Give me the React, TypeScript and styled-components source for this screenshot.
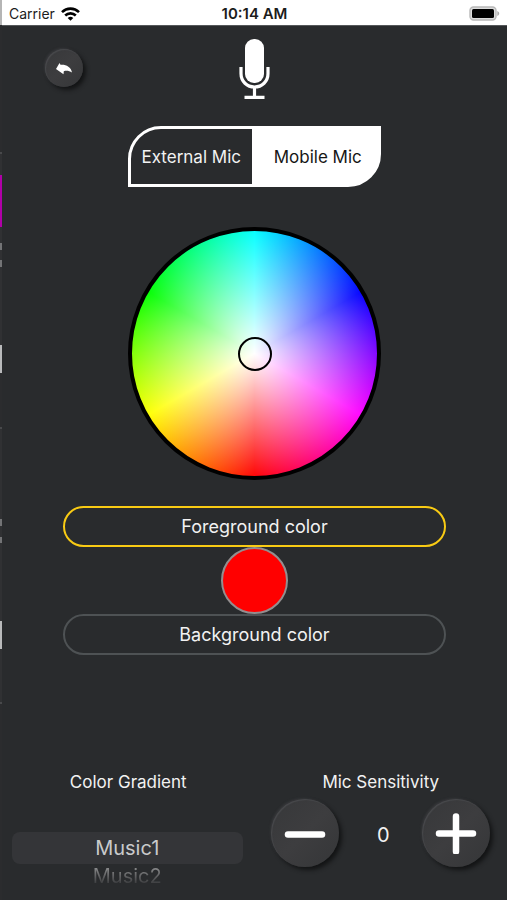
import { useState } from "react";
import styled, { createGlobalStyle } from "styled-components";

const GlobalStyle = createGlobalStyle`
  *, *::before, *::after { box-sizing: border-box; }
  body {
    margin: 0;
    background: #292b2d;
    color: #f2f2f2;
    font-family: Inter, "Liberation Sans", sans-serif;
  }
  button { font: inherit; color: inherit; padding: 0; border: 0; background: none; cursor: pointer; }
`;

const Screen = styled.div`
  display: grid;
  grid-template-columns: 2px minmax(0, 1fr);
  min-height: 100vh;
`;

/* Edge of the page that lies to the left in the pager. */
const PreviousPageEdge = styled.div`
  background: linear-gradient(
    #b5b5b5 0 25px,
    #2b2c2e 25px 152px,
    #48494b 152px 154px,
    #303133 154px 175px,
    #b000a8 175px 227px,
    #303133 227px 243px,
    #737476 243px 250px,
    #303133 250px 260px,
    #737476 260px 267px,
    #303133 267px 345px,
    #b9babb 345px 373px,
    #2b2c2e 373px 427px,
    #48494b 427px 429px,
    #303133 429px 519px,
    #737476 519px 526px,
    #303133 526px 537px,
    #737476 537px 543px,
    #303133 543px 621px,
    #b9babb 621px 649px,
    #303133 649px 702px,
    #48494b 702px 704px,
    #2b2c2e 704px
  );
`;

const Page = styled.div`
  display: flex;
  flex-direction: column;
`;

const StatusBar = styled.div`
  display: grid;
  grid-template-columns: 1fr auto 1fr;
  align-items: center;
  height: 26px;
  padding: 2px 7px 0 7px;
  background: #fff;
  color: #1c1c1c;
  border-bottom: 1px solid #55585a;
  font-size: 14px;
  line-height: 20px;
`;

const Carrier = styled.span`
  display: flex;
  align-items: center;
  gap: 6px;
`;

const Clock = styled.time`
  font-size: 15px;
  font-weight: 600;
`;

const BatterySlot = styled.span`
  display: flex;
  justify-content: flex-end;
`;

const Header = styled.header`
  display: grid;
  grid-template-columns: 1fr auto 1fr;
  align-items: start;
  padding: 13px 43px 0;
`;

const RoundButton = styled.button<{ $size: number }>`
  && {
    display: flex;
    align-items: center;
    justify-content: center;
    flex: none;
    width: ${(p) => p.$size}px;
    height: ${(p) => p.$size}px;
    border-radius: 50%;
    background: linear-gradient(135deg, #37383a, #3d3d3f 50%, #353638);
    box-shadow: 3px 3px 4px #131415, -1px -1px 2px #38393c, inset 1px 1px 1px #48494c;
  }
`;

const BackButton = styled(RoundButton)`
  margin-top: 10px;
`;

const Main = styled.main`
  display: flex;
  flex-direction: column;
  align-items: center;
  padding: 26px 61px 0;
`;

const MicSwitch = styled.div`
  display: grid;
  grid-template-columns: 1fr 1fr;
  width: 253px;
  max-width: 100%;
  height: 61px;
`;

const MicOption = styled.button<{ $active: boolean }>`
  && {
    border: 3px solid #fff;
    background: ${(p) => (p.$active ? "#fff" : "transparent")};
    color: ${(p) => (p.$active ? "#161616" : "#f2f2f2")};
    font-size: 17px;
    white-space: nowrap;
  }

  &&:first-child {
    border-top-left-radius: 33px;
  }

  &&:last-child {
    border-bottom-right-radius: 33px;
  }
`;

const ColorWheel = styled.div`
  display: grid;
  place-items: center;
  width: 253px;
  max-width: 100%;
  aspect-ratio: 1;
  margin-top: 40px;
  border: 4px solid #000;
  border-radius: 50%;
  background:
    radial-gradient(closest-side, #fff, rgba(255, 255, 255, 0)) border-box,
    conic-gradient(#0ff, #00f 60deg, #f0f 120deg, #f00 180deg, #ff0 240deg, #0f0 300deg, #0ff) border-box;
`;

const WheelHandle = styled.button`
  && {
    width: 34px;
    height: 34px;
    border: 2px solid #000;
    border-radius: 50%;
  }
`;

const ColorTarget = styled.button<{ $active: boolean }>`
  && {
    width: 100%;
    height: 41px;
    border: 2px solid ${(p) => (p.$active ? "#f9cb14" : "#4e5254")};
    border-radius: 21px;
    font-size: 18px;
  }
`;

const ColorTargets = styled.div`
  display: flex;
  flex-direction: column;
  align-items: center;
  width: 100%;
  margin-top: 26px;
`;

const Swatch = styled.div`
  width: 67px;
  height: 67px;
  border: 2px solid #948e8f;
  border-radius: 50%;
  background: #f00;
`;

const Controls = styled.div`
  display: grid;
  grid-template-columns: 1fr 1fr;
  margin-top: 115px;
`;

const ControlGroup = styled.section`
  display: flex;
  flex-direction: column;
`;

const ControlTitle = styled.h2`
  margin: 0;
  font-size: 17px;
  font-weight: 400;
  line-height: 24px;
  text-align: center;
`;

const Picker = styled.div`
  display: flex;
  flex-direction: column;
  padding: 38px 12px 0 10px;
`;

const PickerOption = styled.label<{ $active: boolean }>`
  display: flex;
  flex: none;
  justify-content: center;
  height: 32px;
  border-radius: 8px;
  background: ${(p) => (p.$active ? "#343538" : "transparent")};
  color: ${(p) => (p.$active ? "#c9cacb" : "transparent")};
  font-size: 20px;
  line-height: ${(p) => (p.$active ? 32 : 24)}px;
  cursor: pointer;

  span {
    background: ${(p) => (p.$active ? "none" : "linear-gradient(#88898a 4px, #3a3b3d 20px)")};
    background-clip: text;
  }

  input {
    appearance: none;
    width: 0;
    height: 0;
    margin: 0;
  }
`;

const Stepper = styled.div`
  display: flex;
  align-items: center;
  justify-content: space-between;
  padding: 5px 17px 0 16px;
`;

const StepValue = styled.output`
  padding: 4px 0 0 6px;
  font-size: 20px;
  line-height: 24px;
`;

function WifiIcon() {
  return (
    <svg width="19" height="14" viewBox="0 0 19 14" fill="none" stroke="#000" strokeWidth="2.6" aria-hidden="true">
      <path d="M1 5.1a12.2 12.2 0 0 1 17 0" />
      <path d="M4.2 8.5a7.6 7.6 0 0 1 10.6 0" />
      <path d="M9.5 13.8 6.7 11a4 4 0 0 1 5.6 0z" fill="#000" stroke="none" />
    </svg>
  );
}

function BatteryIcon() {
  return (
    <svg width="31" height="15" viewBox="0 0 31 15" aria-hidden="true">
      <rect x="1" y="1" width="26" height="13" rx="3.5" fill="#dcdcdc" stroke="#b8b8b8" strokeWidth="1.4" />
      <rect x="3" y="3" width="22" height="9" rx="1.5" fill="#000" />
      <path d="M28.3 5v5c1.1-.4 1.9-1.4 1.9-2.5s-.8-2.1-1.9-2.5z" fill="#ababab" />
    </svg>
  );
}

function BackIcon() {
  return (
    <svg width="18" height="14" viewBox="0 0 18 14" fill="#fff" aria-hidden="true">
      <path d="M1 8 4.500 2l1 1.800C10.500 3.200 16 5.500 17 11.500c-2.500-1.600-5.500-2-8.200-1.300l-.3 3z" />
    </svg>
  );
}

function MicIcon() {
  return (
    <svg width="31" height="61" viewBox="0 0 31 61" aria-hidden="true">
      <rect x="6" y="0" width="19" height="44" rx="9" fill="#fff" />
      <path
        d="M2 28v6.5C2 42.5 8 48 15.5 48S29 42.5 29 34.5V28M15.5 48v10M5.5 58.3h20"
        fill="none"
        stroke="#fff"
        strokeWidth="3.2"
      />
    </svg>
  );
}

function StepIcon({ plus = false }: { plus?: boolean }) {
  return (
    <svg width="42" height="42" viewBox="0 0 42 42" stroke="#fff" strokeWidth="6.5" strokeLinecap="round" aria-hidden="true">
      <path d={plus ? "M4 21.5h34M21 4.5v35" : "M4 22.5h34"} />
    </svg>
  );
}

export default function App() {
  const [mic, setMic] = useState("Mobile Mic");
  const [target, setTarget] = useState("Foreground color");
  const [pattern, setPattern] = useState("Music1");
  const [sensitivity, setSensitivity] = useState(0);

  return (
    <>
      <GlobalStyle />
      <Screen>
        <PreviousPageEdge />
        <Page>
          <StatusBar>
            <Carrier>
              Carrier
              <WifiIcon />
            </Carrier>
            <Clock>10:14 AM</Clock>
            <BatterySlot>
              <BatteryIcon />
            </BatterySlot>
          </StatusBar>
          <Header>
            <BackButton $size={38} aria-label="Back">
              <BackIcon />
            </BackButton>
            <MicIcon />
          </Header>
          <Main>
            <MicSwitch>
              {["External Mic", "Mobile Mic"].map((name) => (
                <MicOption key={name} $active={mic === name} aria-pressed={mic === name} onClick={() => setMic(name)}>
                  {name}
                </MicOption>
              ))}
            </MicSwitch>
            <ColorWheel>
              <WheelHandle aria-label="Pick color" />
            </ColorWheel>
            <ColorTargets>
              <ColorTarget $active={target === "Foreground color"} onClick={() => setTarget("Foreground color")}>
                Foreground color
              </ColorTarget>
              <Swatch />
              <ColorTarget $active={target === "Background color"} onClick={() => setTarget("Background color")}>
                Background color
              </ColorTarget>
            </ColorTargets>
          </Main>
          <Controls>
            <ControlGroup>
              <ControlTitle>Color Gradient</ControlTitle>
              <Picker role="radiogroup" aria-label="Color Gradient">
                {["Music1", "Music2"].map((name) => (
                  <PickerOption key={name} $active={pattern === name}>
                    <input type="radio" name="pattern" checked={pattern === name} onChange={() => setPattern(name)} />
                    <span>{name}</span>
                  </PickerOption>
                ))}
              </Picker>
            </ControlGroup>
            <ControlGroup>
              <ControlTitle>Mic Sensitivity</ControlTitle>
              <Stepper>
                <RoundButton $size={68} aria-label="Decrease sensitivity" onClick={() => setSensitivity(sensitivity - 1)}>
                  <StepIcon />
                </RoundButton>
                <StepValue>{sensitivity}</StepValue>
                <RoundButton $size={68} aria-label="Increase sensitivity" onClick={() => setSensitivity(sensitivity + 1)}>
                  <StepIcon plus />
                </RoundButton>
              </Stepper>
            </ControlGroup>
          </Controls>
        </Page>
      </Screen>
    </>
  );
}
